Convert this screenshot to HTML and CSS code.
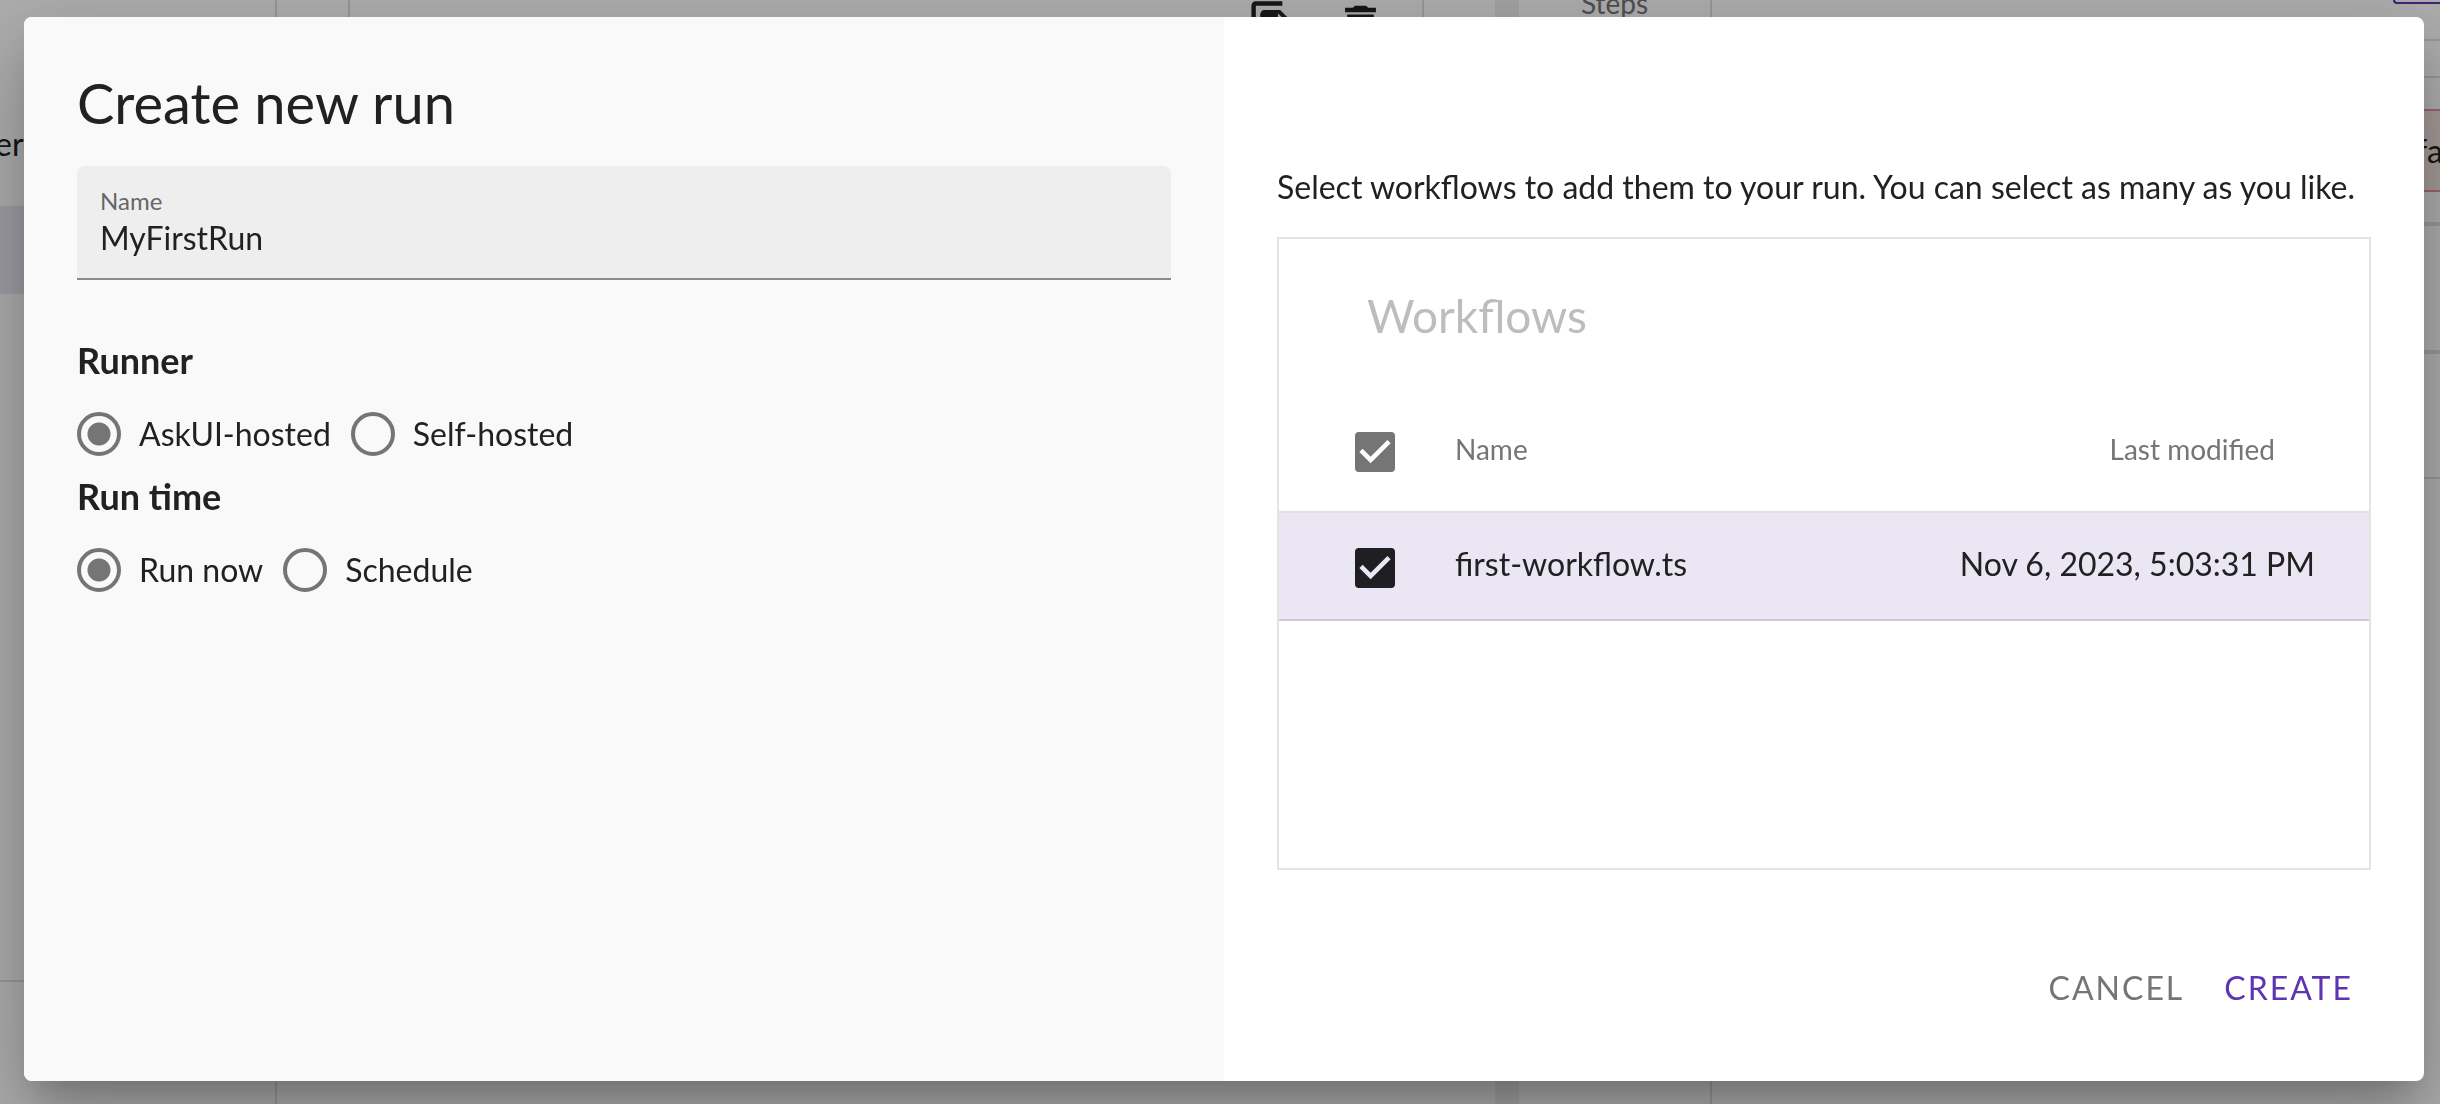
FILE: index.html
```html
<!DOCTYPE html>
<html lang="en">
<head>
<meta charset="utf-8">
<title>Create new run</title>
<link rel="stylesheet" href="styles.css">
</head>
<body>
<div class="app" aria-hidden="true">
  <aside class="sidebar">
    <div class="nav-title">er</div>
    <div class="nav-item"></div>
    <div class="nav-foot"></div>
  </aside>
  <main class="main">
    <div class="sheet">
      <div class="toolbar">
        <svg class="icon" viewBox="0 0 24 24"><path d="M16 1H4c-1.100 0-2 .9-2 2v14h2V3h12V1zm-1 4l6 6v10c0 1.100-.9 2-2 2H8c-1.100 0-2-.9-2-2V7c0-1.100.9-2 2-2h7zm-1 7h5.500L14 6.500V12z"/></svg>
        <svg class="icon" viewBox="0 0 24 24"><path d="M19 4h-3.500l-1-1h-5l-1 1H5v2h14V4zM6 19a2 2 0 0 0 2 2h8a2 2 0 0 0 2-2V7H6v12z"/></svg>
      </div>
    </div>
  </main>
  <div class="splitter"></div>
  <section class="steps">Steps</section>
  <section class="details">
    <div class="details-bar"><span class="outline"></span></div>
    <div class="details-row"></div>
    <div class="details-alert"><div class="alert"><span class="alert-text">fa</span></div></div>
    <div class="details-block"></div>
    <div class="details-last"></div>
  </section>
</div>

<div class="overlay">
  <form class="dialog" role="dialog" aria-labelledby="dialog-title">
    <section class="pane pane-settings">
      <h1 class="title" id="dialog-title">Create new run</h1>
      <div class="field">
        <label class="field-label" for="run-name">Name</label>
        <input class="field-input" id="run-name" type="text" value="MyFirstRun">
      </div>
      <div class="groups">
        <fieldset class="group">
          <legend class="legend">Runner</legend>
          <div class="options">
            <label class="option"><input class="radio" type="radio" name="runner" checked>AskUI-hosted</label>
            <label class="option"><input class="radio" type="radio" name="runner">Self-hosted</label>
          </div>
        </fieldset>
        <fieldset class="group">
          <legend class="legend">Run time</legend>
          <div class="options">
            <label class="option"><input class="radio" type="radio" name="time" checked>Run now</label>
            <label class="option"><input class="radio" type="radio" name="time">Schedule</label>
          </div>
        </fieldset>
      </div>
    </section>
    <section class="pane pane-workflows">
      <p class="hint">Select workflows to add them to your run. You can select as many as you like.</p>
      <div class="card">
        <h2 class="card-title">Workflows</h2>
        <table class="table">
          <thead>
            <tr>
              <th class="cell-check"><input class="check check-all" type="checkbox" aria-label="Select all" checked></th>
              <th class="cell-name">Name</th>
              <th class="cell-date">Last modified</th>
            </tr>
          </thead>
          <tbody>
            <tr>
              <td class="cell-check"><input class="check" type="checkbox" id="wf-1" checked></td>
              <td class="cell-name"><label for="wf-1">first-workflow.ts</label></td>
              <td class="cell-date">Nov 6, 2023, 5:03:31 PM</td>
            </tr>
          </tbody>
        </table>
      </div>
      <div class="actions">
        <button class="btn" type="button">CANCEL</button>
        <button class="btn btn-primary" type="submit">CREATE</button>
      </div>
    </section>
  </form>
</div>
</body>
</html>
```
FILE: styles.css
```css
* {
  box-sizing: border-box;
}

body {
  margin: 0;
  font-family: Lato, "Liberation Sans", sans-serif;
  font-size: 32px;
  line-height: 40px;
  color: #212121;
  overflow: hidden;
}

/* Page behind the dialog, scrolled a little */
.app {
  display: flex;
  height: 100vh;
  background: #fff;
  overflow: hidden;
}

.sidebar {
  flex: 0 0 277px;
  display: flex;
  flex-direction: column;
  border-right: 2px solid #e0e0e0;
}

.nav-title {
  margin: 124px 0 42px -5px;
}

.nav-item {
  height: 88px;
  background: #eae6f4;
}

.nav-foot {
  height: 124px;
  margin-top: auto;
  border-top: 2px solid #e0e0e0;
}

.main {
  flex: 1;
  padding: 0 71px;
  min-width: 0;
}

.sheet {
  height: 90%;
  border: 2px solid #e0e0e0;
  border-width: 0 2px 2px;
}

.toolbar {
  display: flex;
  justify-content: flex-end;
  align-items: center;
  gap: 34px;
  height: 51px;
  padding-right: 35px;
}

.icon {
  flex: none;
  width: 53px;
  height: 53px;
  fill: #212121;
}

.splitter {
  flex: 0 0 24px;
  background: #f0f0f0;
}

.steps {
  flex: 0 0 193px;
  margin-top: -15px;
  padding-left: 62px;
  border-right: 2px solid #e0e0e0;
  font-size: 28px;
  line-height: 36px;
  color: #757575;
}

.details {
  flex: 0 0 728px;
  min-width: 0;
}

.details-bar {
  display: flex;
  justify-content: flex-end;
  height: 41px;
  border-bottom: 2px solid #e0e0e0;
}

.outline {
  width: 47px;
  height: 4px;
  border: 2px solid #5e35b1;
  border-width: 0 0 2px 2px;
  border-bottom-left-radius: 8px;
}

.details-row {
  height: 37px;
  border-bottom: 2px solid #e0e0e0;
}

.details-alert {
  height: 148px;
  padding: 31px 0 0 640px;
  border-bottom: 4px solid #e0e0e0;
}

.alert {
  display: flex;
  align-items: center;
  height: 83px;
  padding-left: 64px;
  background: #f5e3e3;
  border: 2px solid #e69696;
  border-width: 2px 0;
}

.details-block {
  height: 128px;
  border-bottom: 4px solid #e0e0e0;
}

.details-last {
  height: 125px;
  border-bottom: 2px solid #e0e0e0;
}

/* Dialog */
.overlay {
  position: fixed;
  inset: 0;
  display: flex;
  padding: 17px 16px 23px 24px;
  background: rgba(0, 0, 0, 0.32);
}

.dialog {
  flex: 1;
  display: grid;
  grid-template-columns: 1fr 1fr;
  border-radius: 8px;
  background: #fff;
  overflow: hidden;
  box-shadow: 0 22px 30px -14px rgba(0, 0, 0, 0.2), 0 48px 76px 6px rgba(0, 0, 0, 0.14), 0 18px 92px 16px rgba(0, 0, 0, 0.12);
}

.pane {
  display: flex;
  flex-direction: column;
  min-width: 0;
  padding: 53px;
}

.pane-settings {
  background: #f9f9f9;
}

.pane-workflows {
  padding-top: 150px;
}

.title {
  margin: 0 0 30px;
  font-size: 56px;
  line-height: 66px;
  font-weight: 400;
}

.field {
  display: flex;
  flex-direction: column;
  gap: 2px;
  margin-bottom: 58px;
  padding: 20px 23px;
  background: #eee;
  border-bottom: 2px solid #8a8a8a;
  border-radius: 8px 8px 0 0;
}

.field-label {
  font-size: 24px;
  line-height: 30px;
  color: #666;
}

.field-input {
  width: 100%;
  height: 40px;
  padding: 0;
  border: 0;
  outline: 0;
  background: transparent;
  font: inherit;
  color: inherit;
}

.groups {
  display: flex;
  flex-direction: column;
  gap: 18px;
}

.group {
  margin: 0;
  padding: 0;
  border: 0;
}

.legend {
  margin-bottom: 30px;
  padding: 0;
  font-size: 36px;
  line-height: 44px;
  font-weight: 700;
}

.options {
  display: flex;
  gap: 20px;
}

.option {
  display: flex;
  align-items: center;
  gap: 18px;
}

.radio {
  appearance: none;
  width: 44px;
  height: 44px;
  margin: 0;
  border: 4px solid #757575;
  border-radius: 50%;
}

.radio:checked {
  background: radial-gradient(circle, #757575 11px, transparent 12px);
}

.hint {
  margin: 0 0 30px;
  white-space: nowrap;
}

.card {
  flex: 1;
  margin-bottom: 78px;
  padding-top: 50px;
  border: 2px solid #e4e4e4;
}

.card-title {
  margin: 0 0 50px;
  padding-left: 88px;
  font-size: 46px;
  line-height: 54px;
  font-weight: 400;
  color: #bdbdbd;
}

.table {
  width: 100%;
  border-collapse: separate;
  border-spacing: 0;
}

.table th {
  height: 120px;
  padding: 0 0 6px;
  border-bottom: 2px solid #e0e0e0;
  font-size: 28px;
  font-weight: 400;
  text-align: left;
  color: #757575;
}

.table td {
  height: 108px;
  padding: 0 0 4px;
  background: #eae6f4;
  border-bottom: 2px solid #cdc9da;
}

.table .cell-check {
  width: 176px;
  padding: 4px 0 0 76px;
}

.table th.cell-check {
  padding-top: 0;
}

.table .cell-date {
  padding-right: 54px;
  text-align: right;
}

.table th.cell-date {
  padding-right: 94px;
}

.check {
  display: block;
  appearance: none;
  width: 40px;
  height: 40px;
  margin: 0;
  border-radius: 4px;
  background: #1f1f23;
}

.check-all {
  background: #757575;
}

.check::before {
  content: "";
  display: block;
  height: 100%;
  background: #eae6f4;
  clip-path: polygon(39% 78%, 11% 50%, 19% 42%, 39% 62%, 81% 20%, 89% 28%);
}

.check-all::before {
  background: #fff;
}

.actions {
  display: flex;
  justify-content: flex-end;
  gap: 4px;
}

.btn {
  height: 80px;
  padding: 0 18px;
  border: 0;
  background: transparent;
  font: inherit;
  letter-spacing: 2px;
  color: #757575;
}

.btn-primary {
  color: #5e35b1;
}
```
